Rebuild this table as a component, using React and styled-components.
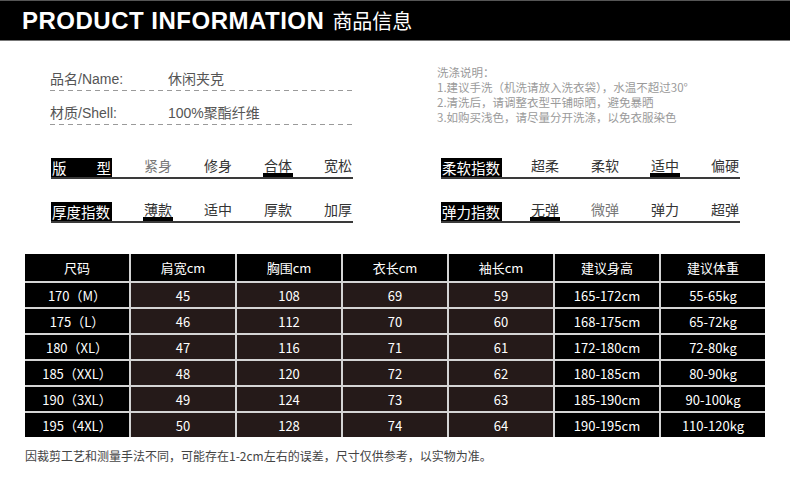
import styled, { createGlobalStyle } from "styled-components";

const cnSans = `"Liberation Sans", "Noto Sans CJK SC", sans-serif`;
const cnHei = `"Noto Sans CJK SC", "Liberation Sans", sans-serif`;

const info = [
	{ label: "品名/Name:", value: "休闲夹克" },
	{ label: "材质/Shell:", value: "100%聚酯纤维" },
];

const washing = [
	"洗涤说明：",
	"1.建议手洗（机洗请放入洗衣袋），水温不超过30°",
	"2.清洗后，请调整衣型平铺晾晒，避免暴晒",
	"3.如购买浅色，请尽量分开洗涤，以免衣服染色",
];

const attributes = [
	{ label: ["版", "型"], options: ["紧身", "修身", "合体", "宽松"], selected: 2, faint: [0] },
	{ label: ["柔软指数"], options: ["超柔", "柔软", "适中", "偏硬"], selected: 2, faint: [] },
	{ label: ["厚度指数"], options: ["薄款", "适中", "厚款", "加厚"], selected: 0, faint: [] },
	{ label: ["弹力指数"], options: ["无弹", "微弹", "弹力", "超弹"], selected: 0, faint: [1] },
];

const headers = ["尺码", "肩宽cm", "胸围cm", "衣长cm", "袖长cm", "建议身高", "建议体重"];

const sizes = [
	["170（M）", "45", "108", "69", "59", "165-172cm", "55-65kg"],
	["175（L）", "46", "112", "70", "60", "168-175cm", "65-72kg"],
	["180（XL）", "47", "116", "71", "61", "172-180cm", "72-80kg"],
	["185（XXL）", "48", "120", "72", "62", "180-185cm", "80-90kg"],
	["190（3XL）", "49", "124", "73", "63", "185-190cm", "90-100kg"],
	["195（4XL）", "50", "128", "74", "64", "190-195cm", "110-120kg"],
];

export default function App() {
	return (
		<>
			<GlobalStyle />
			<Page>
				<Header>
					<HeaderTitle>PRODUCT INFORMATION</HeaderTitle>
					<HeaderSub>商品信息</HeaderSub>
				</Header>

				<InfoSection>
					<InfoList>
						{info.map((item) => (
							<InfoRow key={item.label}>
								<InfoLabel>{item.label}</InfoLabel>
								<span>{item.value}</span>
							</InfoRow>
						))}
					</InfoList>
					<Washing>
						{washing.map((line) => (
							<div key={line}>{line}</div>
						))}
					</Washing>
				</InfoSection>

				<AttrGrid>
					{attributes.map((attr) => (
						<AttrRow key={attr.label.join("")}>
							<AttrLabel>
								{attr.label.map((part) => (
									<span key={part}>{part}</span>
								))}
							</AttrLabel>
							<Options>
								{attr.options.map((option, index) => (
									<Option
										key={option}
										$selected={index === attr.selected}
										$faint={attr.faint.includes(index)}
									>
										{option}
									</Option>
								))}
							</Options>
						</AttrRow>
					))}
				</AttrGrid>

				<SizeTable>
					{headers.map((title) => (
						<HeadCell key={title}>{title}</HeadCell>
					))}
					{sizes.map((row) =>
						row.map((value, index) => (
							<BodyCell key={row[0] + index} $brown={index >= 1 && index <= 4}>
								{value}
							</BodyCell>
						))
					)}
				</SizeTable>

				<Note>因裁剪工艺和测量手法不同，可能存在1-2cm左右的误差，尺寸仅供参考，以实物为准。</Note>
			</Page>
		</>
	);
}

// UI
const GlobalStyle = createGlobalStyle`
	html, body {
		margin: 0;
		padding: 0;
		background: #ffffff;
	}
`;

const Page = styled.div`
	width: 790px;
	height: 494px;
	overflow: hidden;
	background: #ffffff;
	font-family: ${cnSans};
`;

const Header = styled.div`
	height: 39px;
	background: #000000;
	border-top: 1px solid #555555;
	border-bottom: 1px solid #777777;
	display: flex;
	align-items: center;
	padding-left: 22px;
	gap: 8px;
	color: #ffffff;
`;

const HeaderTitle = styled.h1`
	margin: 0;
	font-family: "Liberation Sans", Arial, sans-serif;
	font-weight: 700;
	font-size: 24px;
	letter-spacing: 0.5px;
`;

const HeaderSub = styled.span`
	font-family: ${cnHei};
	font-size: 20px;
	font-weight: 400;
`;

const InfoSection = styled.div`
	display: grid;
	grid-template-columns: 302px 1fr;
	column-gap: 85px;
	margin: 16px 0 0 50px;
`;

const InfoList = styled.div`
	display: flex;
	flex-direction: column;
`;

const InfoRow = styled.div`
	height: 30px;
	padding-bottom: 4px;
	display: flex;
	align-items: flex-end;
	font-size: 14px;
	line-height: 16px;
	color: #555555;
	background-image: repeating-linear-gradient(to right, #9a9a9a 0 5px, transparent 5px 9px);
	background-size: 100% 1px;
	background-repeat: no-repeat;
	background-position: bottom left;
`;

const InfoLabel = styled.span`
	width: 118px;
`;

const Washing = styled.div`
	margin-top: 8px;
	font-family: ${cnHei};
	font-size: 11.5px;
	line-height: 15px;
	color: #9a9a9a;
`;

const AttrGrid = styled.div`
	display: grid;
	grid-template-columns: 302px 299px;
	column-gap: 88px;
	row-gap: 23px;
	margin: 33px 0 0 51px;
`;

const AttrRow = styled.div`
	display: flex;
	justify-content: space-between;
	align-items: flex-end;
	border-bottom: 2px solid #3a3a3a;
`;

const AttrLabel = styled.div`
	width: 61px;
	height: 19px;
	flex-shrink: 0;
	box-sizing: border-box;
	padding: 0 1px;
	background: #000000;
	color: #ffffff;
	font-family: ${cnHei};
	font-size: 14.5px;
	line-height: 19px;
	white-space: nowrap;
	overflow: hidden;
	display: flex;
	justify-content: space-between;
	align-items: center;
`;

const Options = styled.div`
	display: flex;
	gap: 30px;
`;

const Option = styled.div`
	position: relative;
	width: 30px;
	height: 19px;
	text-align: center;
	font-family: ${cnHei};
	font-size: 14px;
	line-height: 15px;
	white-space: nowrap;
	color: ${(props) => (props.$faint ? "#777777" : "#333333")};

	&::after {
		content: "";
		display: ${(props) => (props.$selected ? "block" : "none")};
		position: absolute;
		left: 0;
		right: 0;
		bottom: 0;
		height: 4px;
		background: #000000;
	}
`;

const SizeTable = styled.div`
	display: grid;
	grid-template-columns: repeat(7, 1fr);
	grid-template-rows: 27px repeat(6, 24px);
	gap: 2px;
	width: 740px;
	margin: 31px 0 0 25px;
	background: #d4d4d4;
`;

const HeadCell = styled.div`
	background: #000000;
	color: #ffffff;
	font-family: ${cnHei};
	font-size: 13px;
	display: flex;
	align-items: center;
	justify-content: center;
`;

const BodyCell = styled(HeadCell)`
	background: ${(props) => (props.$brown ? "#251a19" : "#000000")};
`;

const Note = styled.div`
	margin: 10px 0 0 25px;
	font-family: ${cnHei};
	font-size: 12px;
	color: #444444;
`;
